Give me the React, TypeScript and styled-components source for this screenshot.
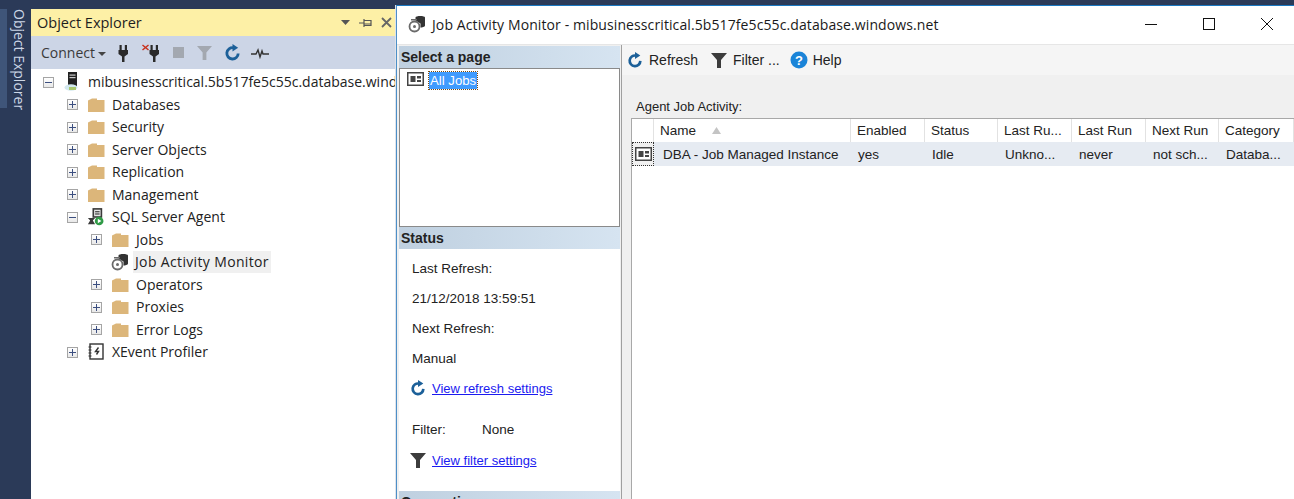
import React from "react";
import styled, { createGlobalStyle } from "styled-components";

const Global = createGlobalStyle`
  html, body { margin: 0; padding: 0; background: #2b3a58; }
  * { box-sizing: border-box; }
`;

const Page = styled.div`
  width: 1294px; height: 499px; overflow: hidden; display: flex;
  background: #2b3a58; font-family: "Open Sans", "Liberation Sans", sans-serif; color: #1e1e1e;
`;
const SideRail = styled.div`width: 31px; flex: none; padding-top: 9px; display: flex; align-items: flex-start;`;
const SideStrip = styled.div`width: 7px; height: 99px; flex: none; background: #3f5579;`;
const SideTab = styled.div`
  margin-left: 4px; height: 100px; color: #ccd6e6; font-size: 14px; line-height: 16px;
  writing-mode: vertical-rl; white-space: nowrap; display: flex; align-items: center;
`;
const Explorer = styled.div`
  width: 365px; flex: none; margin-top: 9px; display: flex; flex-direction: column; background: #fff; overflow: hidden;
`;
const ExplorerTitle = styled.div`
  height: 27px; flex: none; background: #fdf0a6; display: flex; align-items: center; padding: 0 0 0 6px; font-size: 14.5px; color: #1e1e1e;
  justify-content: space-between;
`;
const TitleTools = styled.div`display: flex; align-items: center; gap: 9px; padding-right: 4px;`;
const ExplorerBar = styled.div`
  height: 33px; flex: none; background: #ccd5e6; display: flex; align-items: center; padding-left: 10px; font-size: 14px; color: #3a3a3a;
`;
const BarSlot = styled.span<{ $w: number }>`
  width: ${(p) => p.$w}px; flex: none; display: flex; align-items: center; justify-content: center;
`;
const Tree = styled.div`flex: 1; padding-top: 1.75px;`;
const Row = styled.div<{ $level: number }>`
  height: 22.5px; display: flex; align-items: center; white-space: nowrap; font-size: 14px; color: #222;
  padding-left: ${(p) => 12 + p.$level * 24}px;
`;
const Expander = styled.span`
  width: 11px; height: 11px; flex: none; border: 1px solid #a5a5a5; background: linear-gradient(#fff, #e8e8e8);
  position: relative; margin-right: 9px;
  &::before { content: ""; position: absolute; left: 1px; right: 1px; top: 4px; height: 1px; background: #3c4f80; }
`;
const ExpanderPlus = styled(Expander)`
  &::after { content: ""; position: absolute; top: 1px; bottom: 1px; left: 4px; width: 1px; background: #3c4f80; }
`;
const ExpanderGap = styled.span`width: 20px; flex: none;`;
const IconCell = styled.span`
  width: 18px; height: 18px; flex: none; margin-right: 7px; display: flex; align-items: center; justify-content: center;
`;
const Label = styled.span<{ $on?: boolean }>`
  margin-left: ${(p) => (p.$on ? "-3px" : "0")};
  padding: ${(p) => (p.$on ? "0 2px" : "0")};
  letter-spacing: ${(p) => (p.$on ? "0.35px" : "0")};
  line-height: 22px;
  background: ${(p) => (p.$on ? "#f0f0f0" : "transparent")};
`;

const Dialog = styled.div`
  flex: 1; margin-top: 5px; min-width: 0; display: flex; flex-direction: column; background: #fff;
  border-top: 1px solid #1a78c2; border-left: 1px solid #4d8fc7; position: relative; box-shadow: -1px 0 0 #dfe3ea;
`;
const DialogTitle = styled.div`
  height: 38px; flex: none; background: #fff; display: flex; align-items: center; padding: 0 0 2px 11px;
  font-size: 14px; color: #1a1a1a; white-space: nowrap;
`;
const TitleText = styled.span`flex: 1; margin-left: 6px; letter-spacing: 0.1px;`;
const WinButtons = styled.div`display: flex; align-items: center; gap: 46px; padding-right: 21px;`;
const DialogBody = styled.div`
  flex: 1; min-height: 0; display: flex; background: #f0f0f0; font-family: "Liberation Sans", Arial, sans-serif; font-size: 13.5px; color: #222;
  border-top: 1px solid #e6e6e6;
`;
const LeftPane = styled.div`
  width: 225px; flex: none; padding: 1px 1px 0 2px; display: flex; flex-direction: column; overflow: hidden;
  background: #f0f0f0; border-right: 1px solid #a0a0a0;
`;
const SectionHead = styled.div`
  height: 22px; flex: none; padding-left: 2px; display: flex; align-items: center; font-weight: bold; font-size: 14px; color: #222;
  background: linear-gradient(90deg, #bfd0e0, #d6e4f1);
`;
const PageList = styled.div`
  height: 159px; flex: none; background: #fff; border: 1px solid #8a8a8a; padding: 3px 0 0 7px; display: flex; align-items: flex-start; gap: 5px;
`;
const PageItem = styled.span`
  background: #3f9bff; color: #fff; outline: 1px dotted #7a4a10; padding: 0 1px; line-height: 17px; font-size: 13.2px;
`;
const StatusBody = styled.div`
  height: 242px; flex: none; background: #fff; padding: 4px 0 0 13px; display: flex; flex-direction: column;
`;
const StatusLine = styled.div<{ $h?: number }>`
  height: ${(p) => p.$h ?? 30}px; display: flex; align-items: center; white-space: nowrap;
`;
const FilterKey = styled.span`width: 70px;`;
const LinkRow = styled(StatusLine)`gap: 6px; margin-left: -2px;`;
const Link = styled.a`color: #1b1bf0; text-decoration: underline; font-size: 13px;`;

const RightPane = styled.div`flex: 1; min-width: 0; display: flex; flex-direction: column;`;
const RightBar = styled.div`
  height: 30px; flex: none; background: #f5f5f5; display: flex; align-items: center; padding-left: 5px; gap: 6px; font-size: 14px;
`;
const BarGroup = styled.span<{ $after?: number; $gap?: number }>`
  display: flex; align-items: center; gap: ${(p) => p.$gap ?? 6}px; margin-right: ${(p) => p.$after ?? 7}px;
`;
const Caption = styled.div`
  height: 43px; flex: none; padding: 23px 0 0 14px; font-size: 13px; line-height: 18px; color: #222; white-space: nowrap;
`;
const Grid = styled.div`
  flex: 1; margin-left: 9px; background: #fff; border: 1px solid #a8a8a8; border-right: 0; border-bottom: 0; overflow: hidden;
`;
const Tr = styled.div<{ $alt?: boolean }>`
  height: ${(p) => (p.$alt ? 24 : 23)}px; display: grid; grid-template-columns: 22px 197px 74px 73px 74px 74px 73px 1fr;
  background: ${(p) => (p.$alt ? "#e6ebf2" : "#fff")}; align-items: center;
`;
const Th = styled.div`
  height: 100%; display: flex; align-items: center; padding-left: 6px; white-space: nowrap; border-right: 1px solid #e2e2e2; gap: 16px;
`;
const Td = styled.div<{ $pad?: number }>`padding-left: ${(p) => p.$pad ?? 7}px; white-space: nowrap; overflow: hidden;`;
const RowHead = styled.div`
  width: 22px; height: 24px; display: flex; align-items: center; justify-content: center; outline: 1px dotted #333; outline-offset: -1px; background: #f0f0f0;
`;

const Plug = ({ x = false }: { x?: boolean }) => (
  <svg width="22" height="20" viewBox="0 0 22 20">
    {x && <path d="M0.5 2l6 5M6.5 2l-6 5" stroke="#c8321e" strokeWidth="1.5" />}
    <g fill="#2a2a2a">
      <rect x="8.5" y="2" width="2.2" height="5" /><rect x="13.8" y="2" width="2.2" height="5" />
      <path d="M7.5 7h9.5v4l-3.5 2.5V19h-2.5v-5.5L7.5 11z" />
    </g>
  </svg>
);
const Refresh = ({ s = 18 }: { s?: number }) => (
  <svg width={s} height={s} viewBox="0 0 18 18">
    <path d="M10 4A6 6 0 1 0 15 10" fill="none" stroke="#1c6099" strokeWidth="3" />
    <path d="M9 0v8l6-4z" fill="#1c6099" />
  </svg>
);
const Funnel = ({ c = "#3c3c3c", s = 16 }: { c?: string; s?: number }) => (
  <svg width={s} height={s} viewBox="0 0 16 16"><path d="M0 1h16L10 8v8H6V8z" fill={c} /></svg>
);
const Folder = () => (
  <svg width="18" height="16" viewBox="0 0 18 16">
    <path d="M1 3.5L5 1.5h5V3h7.5v12H1z" fill="#dcb67a" />
  </svg>
);
const Help = () => (
  <svg width="18" height="18" viewBox="0 0 18 18">
    <circle cx="9" cy="9" r="8.5" fill="#1a84d8" />
    <text x="9" y="13.5" textAnchor="middle" fontFamily="Liberation Sans, sans-serif" fontWeight="bold" fontSize="13" fill="#fff">?</text>
  </svg>
);
const PageIcon = () => (
  <svg width="17" height="14" viewBox="0 0 17 14">
    <rect x="0.75" y="0.75" width="15.5" height="12.5" fill="#fff" stroke="#444" strokeWidth="1.5" />
    <rect x="3.5" y="4" width="5" height="6" fill="#444" />
    <rect x="10" y="4" width="4" height="2.5" fill="#444" /><rect x="10" y="8" width="4" height="2" fill="#444" />
  </svg>
);
const JobIcon = ({ s = 18 }: { s?: number }) => (
  <svg width={s} height={s} viewBox="0 0 18 18">
    <path d="M7.5 2.5C7.5 0.5 17 0.5 17 2.5v8C17 12 14 12.5 12.5 12.5V8.5L7.5 5.5z" fill="#333" />
    <circle cx="6.5" cy="11.5" r="5" fill="#fff" stroke="#6a6a6a" strokeWidth="1.8" />
    <circle cx="6.5" cy="11.5" r="1.5" fill="#6a6a6a" />
    <rect x="3" y="4" width="6" height="1.5" fill="#6a6a6a" />
  </svg>
);
const ServerIcon = () => (
  <svg width="18" height="20" viewBox="0 0 18 20">
    <rect x="5" y="0" width="9" height="15" fill="#222" />
    <rect x="6.5" y="2.5" width="6" height="1.2" fill="#ccc" /><rect x="6.5" y="5" width="6" height="1.2" fill="#ccc" />
    <ellipse cx="8" cy="15.5" rx="6.5" ry="3.2" fill="#d2e8ef" />
    <rect x="6" y="15" width="7" height="3" fill="#a9c96e" />
  </svg>
);
const AgentIcon = () => (
  <svg width="20" height="20" viewBox="0 0 20 20">
    <rect x="7" y="1" width="9" height="9" fill="#e6e6e6" stroke="#3a3a3a" strokeWidth="1.8" />
    <rect x="9" y="3.5" width="5" height="1.3" fill="#3a3a3a" /><rect x="9" y="6" width="5" height="1.3" fill="#3a3a3a" />
    <path d="M1 11h8l-2.5 3L9 18H1l2.5-4z" fill="#3a3a3a" />
    <circle cx="13.5" cy="14.5" r="4.8" fill="#2f9a46" />
    <path d="M12 12l4 2.5-4 2.5z" fill="#fff" />
  </svg>
);
const XEventIcon = () => (
  <svg width="16" height="18" viewBox="0 0 16 18">
    <rect x="2" y="1" width="13" height="15" fill="#fff" stroke="#333" strokeWidth="1.4" />
    <path d="M0.5 4h3M0.5 7h3M0.5 10h3M0.5 13h3" stroke="#333" strokeWidth="1.2" />
    <path d="M10.5 4.5L7.5 8.5h3l-2 3" stroke="#333" strokeWidth="1.4" fill="none" />
  </svg>
);

const OeRow = ({ level, open, plus, icon, text, on }: { level: number; open?: boolean; plus?: boolean; icon: React.ReactNode; text: string; on?: boolean }) => (
  <Row $level={level}>
    {open ? <Expander /> : plus ? <ExpanderPlus /> : <ExpanderGap />}
    <IconCell>{icon}</IconCell>
    <Label $on={on}>{text}</Label>
  </Row>
);

const cols = ["Enabled", "Status", "Last Ru...", "Last Run", "Next Run", "Category"];
const cells = ["yes", "Idle", "Unkno...", "never", "not sch...", "Databa..."];

export default function App() {
  return (
    <Page>
      <Global />
      <SideRail><SideStrip /><SideTab>Object Explorer</SideTab></SideRail>
      <Explorer>
        <ExplorerTitle>
          Object Explorer
          <TitleTools>
            <svg width="9" height="5" viewBox="0 0 9 5"><path d="M0 0h9L4.5 5z" fill="#555" /></svg>
            <svg width="13" height="10" viewBox="0 0 13 10"><path d="M0 5h5M5 1v8M5 2.5h7v5H5M5 6h7" stroke="#555" strokeWidth="1.2" fill="none" /></svg>
            <svg width="11" height="11" viewBox="0 0 11 11"><path d="M1 1l9 9M10 1l-9 9" stroke="#666" strokeWidth="1.8" /></svg>
          </TitleTools>
        </ExplorerTitle>
        <ExplorerBar>
          Connect
          <svg width="8" height="4" viewBox="0 0 8 4" style={{ margin: "2px 0 0 3px" }}><path d="M0 0h8L4 4z" fill="#444" /></svg>
          <BarSlot $w={33}><Plug /></BarSlot>
          <BarSlot $w={28}><Plug x /></BarSlot>
          <BarSlot $w={23}><svg width="11" height="11"><rect width="11" height="11" fill="#a3a8b0" /></svg></BarSlot>
          <BarSlot $w={30}><Funnel c="#a3a8b0" s={15} /></BarSlot>
          <BarSlot $w={26}><Refresh s={17} /></BarSlot>
          <BarSlot $w={28}>
            <svg width="18" height="12" viewBox="0 0 18 12"><path d="M0 7h5l2-4 2 7 2-6 1 3h6" fill="none" stroke="#333" strokeWidth="1.4" /></svg>
          </BarSlot>
        </ExplorerBar>
        <Tree>
          <OeRow level={0} open icon={<ServerIcon />} text="mibusinesscritical.5b517fe5c55c.database.windows.net" />
          <OeRow level={1} plus icon={<Folder />} text="Databases" />
          <OeRow level={1} plus icon={<Folder />} text="Security" />
          <OeRow level={1} plus icon={<Folder />} text="Server Objects" />
          <OeRow level={1} plus icon={<Folder />} text="Replication" />
          <OeRow level={1} plus icon={<Folder />} text="Management" />
          <OeRow level={1} open icon={<AgentIcon />} text="SQL Server Agent" />
          <OeRow level={2} plus icon={<Folder />} text="Jobs" />
          <OeRow level={2} icon={<JobIcon />} text="Job Activity Monitor" on />
          <OeRow level={2} plus icon={<Folder />} text="Operators" />
          <OeRow level={2} plus icon={<Folder />} text="Proxies" />
          <OeRow level={2} plus icon={<Folder />} text="Error Logs" />
          <OeRow level={1} plus icon={<XEventIcon />} text="XEvent Profiler" />
        </Tree>
      </Explorer>
      <Dialog>
        <DialogTitle>
          <JobIcon />
          <TitleText>Job Activity Monitor - mibusinesscritical.5b517fe5c55c.database.windows.net</TitleText>
          <WinButtons>
            <svg width="12" height="12" viewBox="0 0 12 12"><path d="M0 6.5h12" stroke="#111" /></svg>
            <svg width="12" height="12" viewBox="0 0 12 12"><rect x="0.5" y="0.5" width="11" height="11" fill="none" stroke="#111" /></svg>
            <svg width="12" height="12" viewBox="0 0 12 12"><path d="M0 0l12 12M12 0L0 12" stroke="#111" /></svg>
          </WinButtons>
        </DialogTitle>
        <DialogBody>
          <LeftPane>
            <SectionHead>Select a page</SectionHead>
            <PageList><PageIcon /><PageItem>All Jobs</PageItem></PageList>
            <SectionHead>Status</SectionHead>
            <StatusBody>
              <StatusLine>Last Refresh:</StatusLine>
              <StatusLine>21/12/2018 13:59:51</StatusLine>
              <StatusLine>Next Refresh:</StatusLine>
              <StatusLine>Manual</StatusLine>
              <LinkRow><Refresh s={16} /><Link>View refresh settings</Link></LinkRow>
              <StatusLine $h={52}><FilterKey>Filter:</FilterKey>None</StatusLine>
              <LinkRow $h={10}><Funnel s={16} /><Link>View filter settings</Link></LinkRow>
            </StatusBody>
            <SectionHead>Connection</SectionHead>
          </LeftPane>
          <RightPane>
            <RightBar>
              <BarGroup><Refresh s={16} />Refresh</BarGroup>
              <BarGroup $after={4}><Funnel s={16} />Filter ...</BarGroup>
              <BarGroup $gap={5}><Help />Help</BarGroup>
            </RightBar>
            <Caption>Agent Job Activity:</Caption>
            <Grid>
              <Tr>
                <Th />
                <Th>Name<svg width="9" height="7" viewBox="0 0 9 7"><path d="M4.5 0L9 7H0z" fill="#c4c4c4" /></svg></Th>
                {cols.map((c) => <Th key={c}>{c}</Th>)}
              </Tr>
              <Tr $alt>
                <RowHead><PageIcon /></RowHead>
                <Td $pad={9}>DBA - Job Managed Instance</Td>
                {cells.map((c) => <Td key={c}>{c}</Td>)}
              </Tr>
            </Grid>
          </RightPane>
        </DialogBody>
      </Dialog>
    </Page>
  );
}
